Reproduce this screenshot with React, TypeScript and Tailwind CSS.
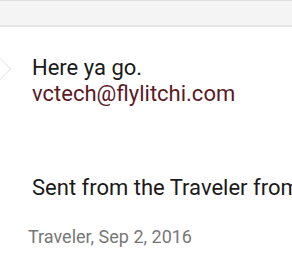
export default function App() {
  return (
    <div className="relative flex h-[254px] w-[292px] flex-col overflow-hidden bg-white" style={{ fontFamily: 'Roboto, "Noto Sans", sans-serif' }}>
      {/* top bar */}
      <div className="h-[27px] shrink-0 border-t border-b-2 border-t-[#dcdddc] border-b-[#e4e6e4] bg-[#f3f4f3]" />

      {/* bubble tail */}
      <div className="absolute left-[-8px] top-[61px] h-[16px] w-[16px] rotate-45 border-t border-r border-[#e6e6e6] bg-white" />

      {/* message */}
      <div className="flex flex-col pl-[32px] pt-[27.5px] text-[22px] leading-[26px] text-[#1a1a1a] whitespace-nowrap">
        <p>Here ya go.</p>
        <p className="text-[#5b1a26]">vctech@flylitchi.com</p>
        <p className="mt-[68px]">Sent from the Traveler from my phone</p>
      </div>

      <div className="pl-[28px] pt-[26.5px] text-[18px] leading-[20px] text-[#777777] whitespace-nowrap">
        Traveler, Sep 2, 2016
      </div>
    </div>
  )
}
